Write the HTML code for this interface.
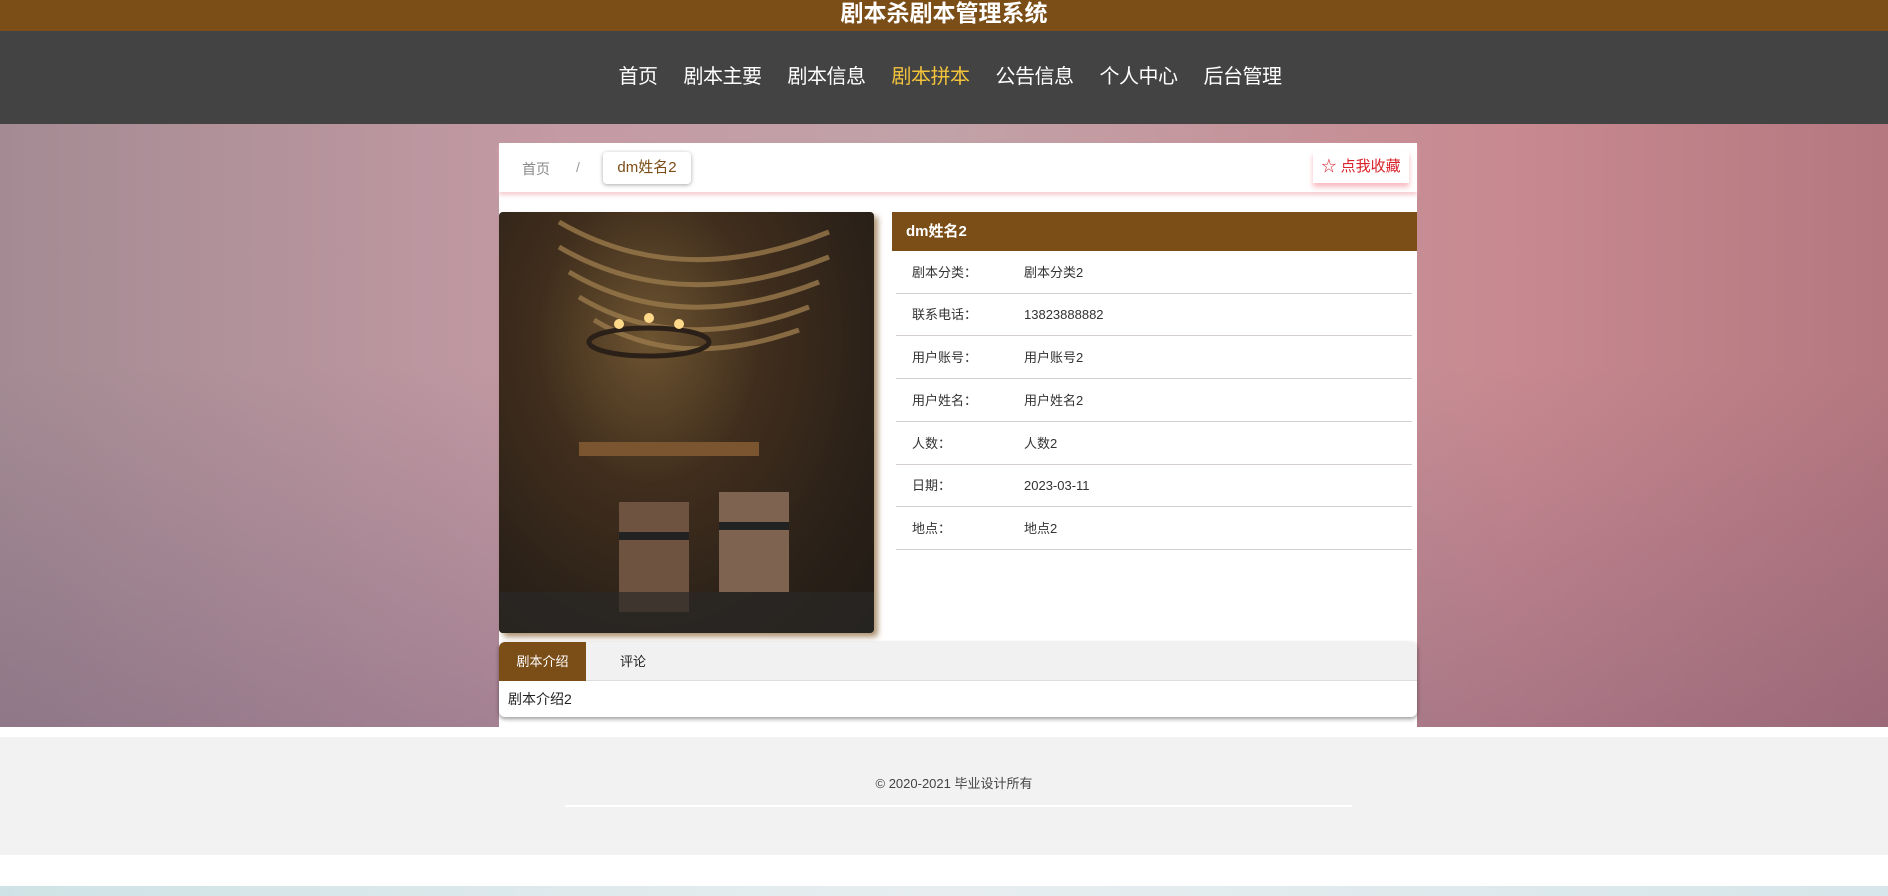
<!DOCTYPE html>
<html><head><meta charset="utf-8"><style>
*{margin:0;padding:0;box-sizing:border-box}
body{width:1888px;height:896px;overflow:hidden;font-family:"Liberation Sans","Noto Sans CJK SC",sans-serif;background:#fff;position:relative}
.top{position:absolute;left:0;top:0;width:1888px;height:31px;background:#7b4d17;color:#fff;font-size:23px;font-weight:bold;text-align:center;line-height:26px}
.nav{position:absolute;left:0;top:31px;width:1888px;height:93px;background:#434343;text-align:center;padding-left:12px}
.nav span{display:inline-block;color:#fff;font-size:20px;line-height:93px;margin:0 13px;letter-spacing:-0.5px}
.nav span.on{color:#f3c33b}
.bg{position:absolute;left:0;top:124px;width:1888px;height:603px;background:linear-gradient(90deg,#a48b93 0%,#c49aa4 30%,#c1a2a8 50%,#c88990 80%,#b57880 100%)}
.bg:after{content:"";position:absolute;inset:0;background:linear-gradient(180deg,rgba(255,255,255,0) 40%,rgba(80,60,100,.25) 100%)}
.box{position:absolute;left:499px;top:143px;width:918px;height:584px;background:#fff}
.bc{position:absolute;left:0;top:0;width:918px;height:49px;box-shadow:0 3px 4px rgba(240,170,180,.6)}
.bc .h{position:absolute;left:23px;top:16px;font-size:14px;color:#888}
.bc .s{position:absolute;left:77px;top:16px;font-size:14px;color:#999}
.bc .c{position:absolute;left:104px;top:9px;width:88px;height:32px;border-radius:4px;box-shadow:0 1px 4px rgba(0,0,0,.35);font-size:15px;color:#7b4d17;text-align:center;line-height:32px}
.fav{position:absolute;right:8px;top:8px;width:96px;height:32px;font-size:15px;color:#d8232a;line-height:32px;text-align:center;box-shadow:0 4px 5px rgba(240,120,130,.5);background:#fff}
.img{position:absolute;left:0;top:69px;width:375px;height:421px;border-radius:4px;box-shadow:4px 4px 6px rgba(123,77,23,.6);background:radial-gradient(ellipse at 40% 30%,#8a6a3c 0%,#4a3420 35%,#2c221a 70%,#1c1814 100%);overflow:hidden}
.ih{position:absolute;left:393px;top:69px;width:525px;height:39px;background:#7b4d17;color:#fff;font-weight:bold;font-size:15px;line-height:39px;padding-left:14px}
.row{position:absolute;left:397px;width:516px;height:43px;border-bottom:1px solid #d5cfd1;font-size:13px;color:#333;line-height:44px}
.row b{font-weight:normal;position:absolute;left:16px}
.row i{font-style:normal;position:absolute;left:128px}
.tabs{position:absolute;left:0;top:499px;width:918px;height:75px;border-radius:6px;background:#fff;box-shadow:0 2px 4px rgba(0,0,0,.4);overflow:hidden}
.tb{height:39px;background:#f1f1f1;border-bottom:1px solid #ddd;white-space:nowrap;font-size:0}
.tb span{display:inline-block;height:39px;line-height:39px;font-size:13px;vertical-align:top;white-space:nowrap}
.tb .a{background:#7b4d17;color:#fff;width:87px;text-align:center}
.tb .b{padding-left:34px;color:#222}
.tc{font-size:14px;padding:8px 9px;color:#222}
.foot{position:absolute;left:0;top:737px;width:1888px;height:118px;background:#f2f2f2}
.foot p{position:absolute;top:36px;width:100%;text-align:center;font-size:13px;color:#444;padding-left:20px}
.foot .l{position:absolute;left:565px;top:68px;width:787px;height:2px;background:#fff}
.btm{position:absolute;left:0;top:886px;width:1888px;height:10px;background:linear-gradient(90deg,#cfe3e6,#e8eef0 50%,#d6e6ea)}
</style></head><body>
<div class="top">剧本杀剧本管理系统</div>
<div class="nav"><span>首页</span><span>剧本主要</span><span>剧本信息</span><span class="on">剧本拼本</span><span>公告信息</span><span>个人中心</span><span>后台管理</span></div>
<div class="bg"></div>
<div class="box">
 <div class="bc"><span class="h">首页</span><span class="s">/</span><span class="c">dm姓名2</span><div class="fav">☆ 点我收藏</div></div>
 <div class="img">
  <svg width="375" height="421" viewBox="0 0 375 421">
   <rect width="375" height="421" fill="#2a2018" opacity=".3"/>
   <g stroke="#9a7a4c" stroke-width="5" fill="none" opacity=".8">
    <path d="M60 10 Q180 80 330 20"/><path d="M60 35 Q180 105 330 45"/><path d="M70 60 Q180 125 320 70"/><path d="M80 85 Q180 145 310 95"/><path d="M95 108 Q180 160 300 118"/>
   </g>
   <ellipse cx="150" cy="130" rx="60" ry="14" fill="none" stroke="#2a2018" stroke-width="5"/>
   <g fill="#ffd98a"><circle cx="120" cy="112" r="5"/><circle cx="150" cy="106" r="5"/><circle cx="180" cy="112" r="5"/></g>
   <rect x="80" y="230" width="180" height="14" fill="#7a5530"/>
   <rect x="120" y="290" width="70" height="110" fill="#6e5440"/><rect x="220" y="280" width="70" height="100" fill="#7e6450"/>
   <rect x="120" y="320" width="70" height="8" fill="#222"/><rect x="220" y="310" width="70" height="8" fill="#222"/>
   <rect x="0" y="380" width="375" height="41" fill="#2a2826" opacity=".7"/>
  </svg>
 </div>
 <div class="ih">dm姓名2</div>
 <div class="row" style="top:108px"><b>剧本分类：</b><i>剧本分类2</i></div>
 <div class="row" style="top:150px"><b>联系电话：</b><i>13823888882</i></div>
 <div class="row" style="top:193px"><b>用户账号：</b><i>用户账号2</i></div>
 <div class="row" style="top:236px"><b>用户姓名：</b><i>用户姓名2</i></div>
 <div class="row" style="top:279px"><b>人数：</b><i>人数2</i></div>
 <div class="row" style="top:321px"><b>日期：</b><i>2023-03-11</i></div>
 <div class="row" style="top:364px"><b>地点：</b><i>地点2</i></div>
 <div class="tabs"><div class="tb"><span class="a">剧本介绍</span><span class="b">评论</span></div><div class="tc">剧本介绍2</div></div>
</div>
<div class="foot"><p>© 2020-2021 毕业设计所有</p><div class="l"></div></div>
<div class="btm"></div>
</body></html>
